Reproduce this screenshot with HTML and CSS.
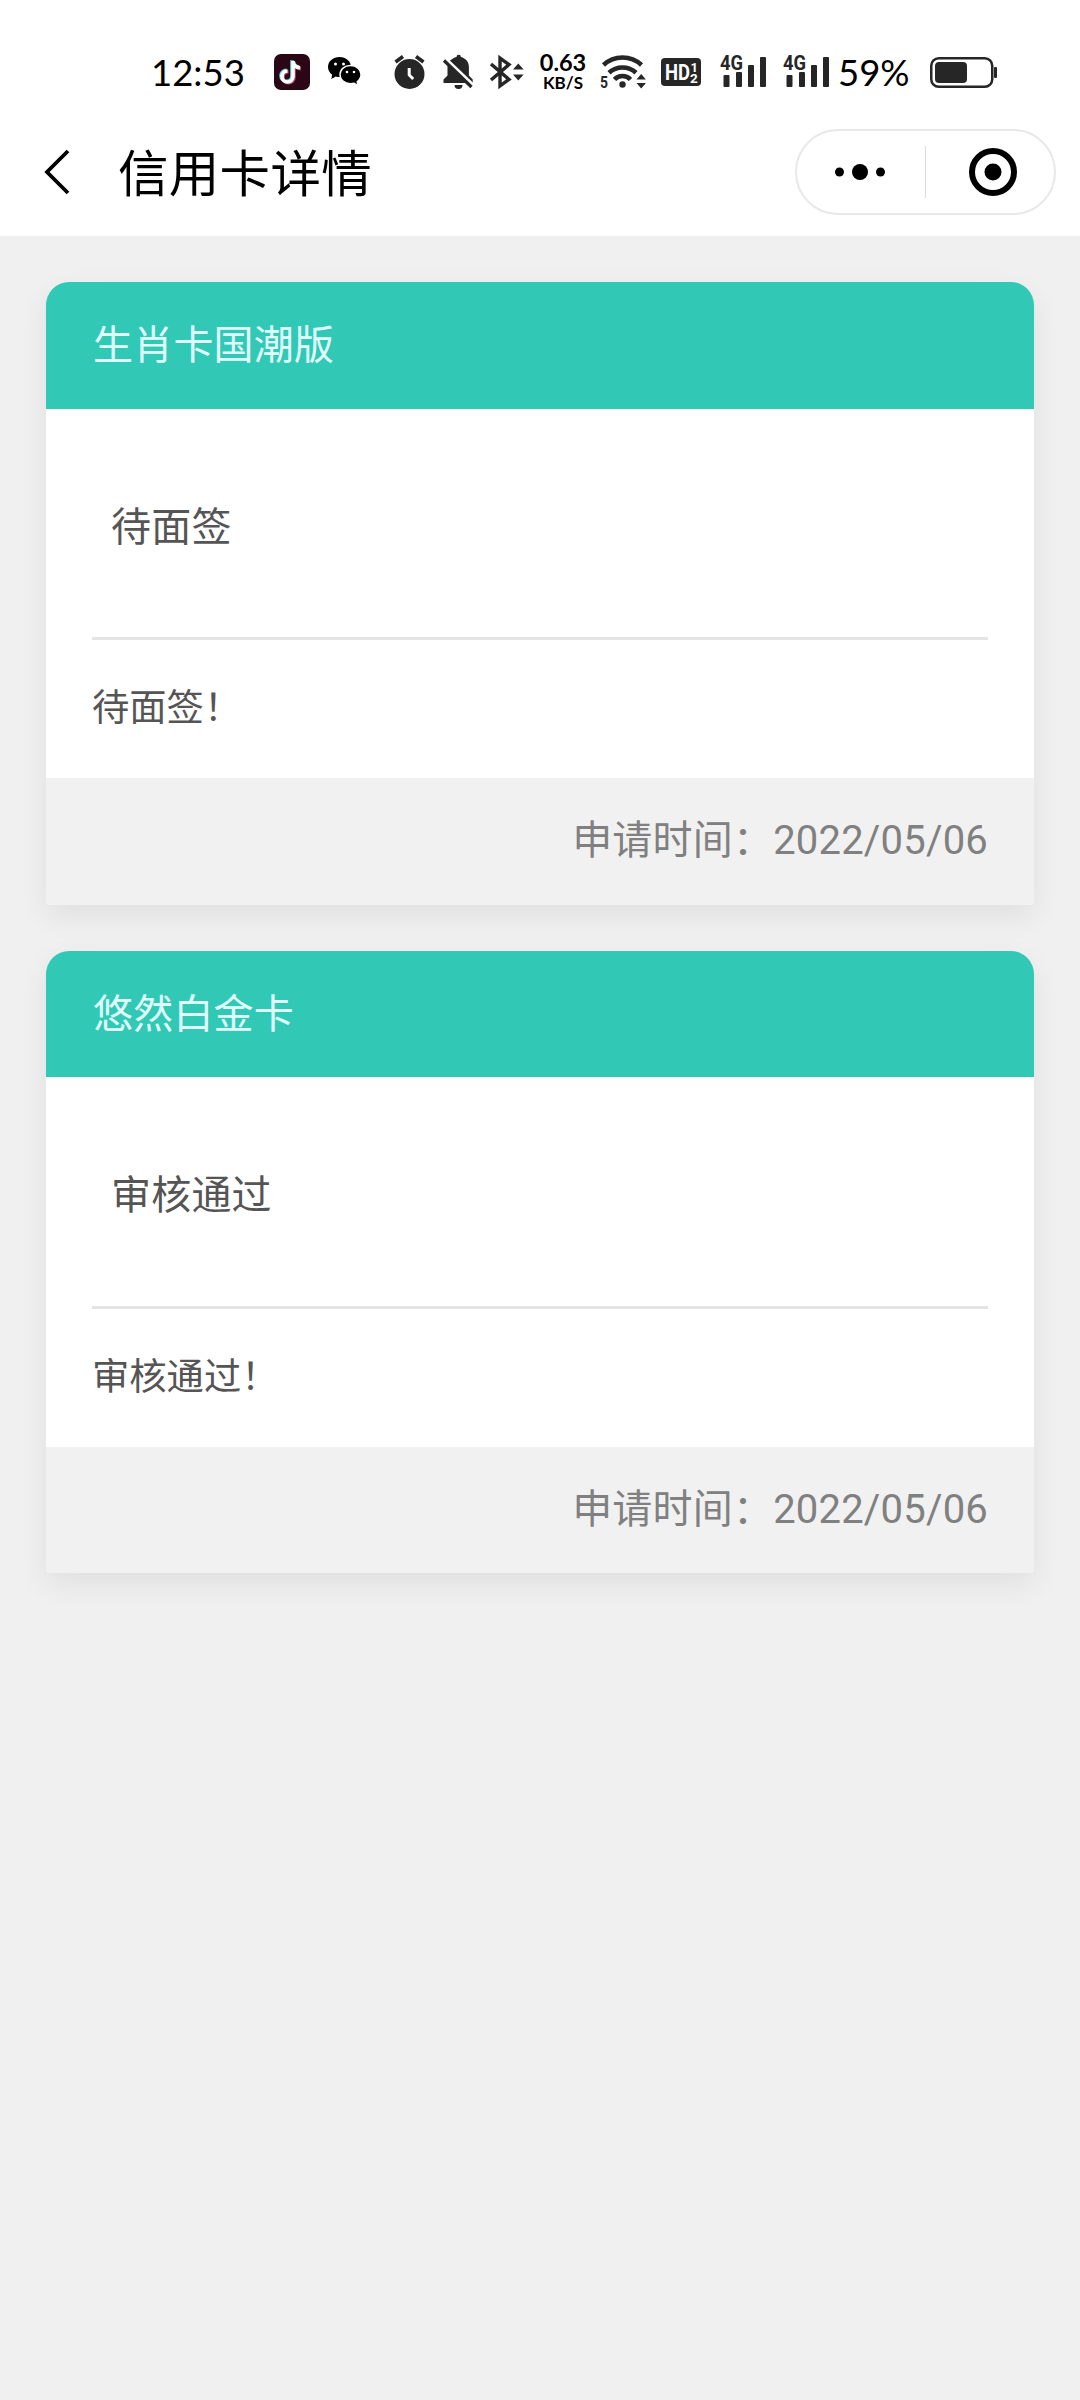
FILE: index.html
```html
<!DOCTYPE html>
<html lang="zh-CN">
<head>
<meta charset="utf-8">
<title>信用卡详情</title>
<link rel="stylesheet" href="styles.css">
</head>
<body>
<header class="top">
  <div class="statusbar">
    <span class="clock">12:53</span>
    <svg class="icon tiktok" width="36" height="36" viewBox="0 0 36 36">
      <rect width="36" height="36" rx="7" fill="#2b0716"/>
      <g fill="none" stroke-width="3.600">
        <path d="M19 7v15.500a5.500 5.500 0 1 1-5.500-5.500M19 7.500c.5 4 3.200 6 7 6.300" stroke="#62d5db" transform="translate(-1 -.800)"/>
        <path d="M19 7v15.500a5.500 5.500 0 1 1-5.500-5.500M19 7.500c.5 4 3.200 6 7 6.300" stroke="#b84666" transform="translate(1 .800)"/>
        <path d="M19 7v15.500a5.500 5.500 0 1 1-5.500-5.500M19 7.500c.5 4 3.200 6 7 6.300" stroke="#fff"/>
      </g>
    </svg>
    <svg class="icon wechat" width="34" height="30" viewBox="0 0 34 30">
      <path d="M11.500 0C5 0 0 4.400 0 10c0 3.200 1.600 5.900 4.200 7.700L3.300 22l4.500-2.500c1.300.4 2.500.6 3.700.6 6.500 0 11.500-4.500 11.500-10.100S18 0 11.500 0z"/>
      <path d="M22.500 8.500C16.500 8.500 12 12.500 12 17.600s4.500 9.100 10.500 9.100c1.300 0 2.500-.2 3.600-.5l4 2.300-.9-3.800c2.300-1.700 3.800-4.200 3.800-7.100 0-5.100-4.500-9.100-10.500-9.100z" stroke="#fff" stroke-width="1.400"/>
      <g fill="#fff"><circle cx="7.500" cy="7" r="1.500"/><circle cx="15.500" cy="7" r="1.500"/><circle cx="19" cy="15" r="1.300"/><circle cx="26" cy="15" r="1.300"/></g>
    </svg>
    <svg class="icon alarm" width="31" height="34" viewBox="0 0 31 34">
      <circle cx="15.500" cy="19" r="15"/>
      <path d="M1.500 7L9 1.500M29.500 7L22 1.500" stroke="#262626" stroke-width="3.600"/>
      <path d="M15.200 13v7l4 4" fill="none" stroke="#fff" stroke-width="3"/>
    </svg>
    <svg class="icon bell" width="31" height="34" viewBox="0 0 31 34">
      <path d="M13.500 2a2.200 2.200 0 0 1 4.400 0c5 1.300 8 5 8 10v8.500l3.800 4V28H.500v-3.500l4-4V12c0-5 4-8.700 9-10zM11.500 30h8a4 4 0 0 1-8 0z"/>
      <path d="M3.200 4.200L31 30.500" stroke="#fff" stroke-width="3"/>
      <path d="M1 5.500L28.500 32" stroke="#262626" stroke-width="3.200"/>
    </svg>
    <svg class="icon bluetooth" width="34" height="34" viewBox="0 0 34 34">
      <path d="M1 9l18 15.500L10 31V3l9 6.500L1 25" fill="none" stroke="#262626" stroke-width="3.400"/>
      <path d="M23 14.500l5.300-6 5.300 6zM23 19.500h10.600l-5.300 6z"/>
    </svg>
    <div class="speed"><span class="speed-value">0.63</span><span class="speed-unit">KB/S</span></div>
    <svg class="icon wifi" width="46" height="36" viewBox="0 0 46 36">
      <g fill="none" stroke="#262626" stroke-width="4.600">
        <path d="M3.500 11a28 28 0 0 1 38 0"/>
        <path d="M9 18.700a20 20 0 0 1 27 0"/>
        <path d="M14.500 25.500a11 11 0 0 1 16 0"/>
      </g>
      <circle cx="22.500" cy="30.500" r="3.200"/>
      <path d="M36.500 25.500l4.700-5.500 4.700 5.500zM36.500 29h9.400l-4.700 5.500z"/>
      <text class="glyph-text" x="0" y="34" font-size="17" textLength="8" lengthAdjust="spacingAndGlyphs">5</text>
    </svg>
    <svg class="icon hd" width="40" height="28" viewBox="0 0 40 28">
      <rect width="40" height="28" rx="4"/>
      <g fill="#fff" class="glyph-text">
        <text x="4" y="21.500" font-size="22" textLength="25" lengthAdjust="spacingAndGlyphs">HD</text>
        <text x="29.500" y="13.500" font-size="13">1</text>
        <text x="29" y="24.500" font-size="13.500">2</text>
      </g>
    </svg>
    <svg class="icon signal" width="47" height="34" viewBox="0 0 47 34">
      <text class="glyph-text" x="0" y="15" font-size="20" textLength="23" lengthAdjust="spacingAndGlyphs">4G</text>
      <rect x="3.500" y="20" width="6" height="12" rx="1"/><rect x="16" y="17" width="6" height="15" rx="1"/><rect x="28" y="10" width="6" height="22" rx="1"/><rect x="40" y="2" width="6" height="30" rx="1"/>
    </svg>
    <svg class="icon signal second" width="47" height="34" viewBox="0 0 47 34">
      <text class="glyph-text" x="0" y="15" font-size="20" textLength="23" lengthAdjust="spacingAndGlyphs">4G</text>
      <rect x="3.500" y="20" width="6" height="12" rx="1"/><rect x="16" y="17" width="6" height="15" rx="1"/><rect x="28" y="10" width="6" height="22" rx="1"/><rect x="40" y="2" width="6" height="30" rx="1"/>
    </svg>
    <span class="percent">59%</span>
    <svg class="icon battery" width="67" height="31" viewBox="0 0 67 31">
      <rect x="1.250" y="1.250" width="61" height="28.500" rx="7.500" fill="none" stroke="#262626" stroke-width="2.500"/>
      <rect x="5" y="5" width="32" height="21" rx="4"/>
      <rect x="64" y="10" width="3" height="11" rx="1"/>
    </svg>
  </div>
  <nav class="navbar">
    <svg class="back" width="26" height="48" viewBox="0 0 26 48"><path d="M24 3L3 24 24 45" fill="none" stroke="#000" stroke-width="3.800"/></svg>
    <h1 class="title">信用卡详情</h1>
    <div class="capsule">
      <svg class="more" width="52" height="18" viewBox="0 0 52 18"><circle cx="5.500" cy="9" r="4.500"/><circle cx="26" cy="9" r="8"/><circle cx="46.500" cy="9" r="4.500"/></svg>
      <span class="separator"></span>
      <svg class="close" width="48" height="48" viewBox="0 0 48 48"><circle cx="24" cy="24" r="21" fill="none" stroke="#000" stroke-width="6"/><circle cx="24" cy="24" r="8.500"/></svg>
    </div>
  </nav>
</header>
<main class="list">
  <section class="card">
    <h2 class="card-title">生肖卡国潮版</h2>
    <div class="card-body">
      <p class="status">待面签</p>
      <p class="note">待面签！</p>
    </div>
    <footer class="card-foot">申请时间：2022/05/06</footer>
  </section>
  <section class="card">
    <h2 class="card-title">悠然白金卡</h2>
    <div class="card-body">
      <p class="status">审核通过</p>
      <p class="note">审核通过！</p>
    </div>
    <footer class="card-foot">申请时间：2022/05/06</footer>
  </section>
</main>
</body>
</html>
```
FILE: styles.css
```css
* { box-sizing: border-box; margin: 0; padding: 0; }
body {
  min-height: 2400px;
  background: #f0f0f0;
  font-family: Roboto, "Noto Sans CJK SC", sans-serif;
}
svg { display: block; flex: none; overflow: visible; }

.top { height: 236px; background: #fff; }
.statusbar {
  display: flex;
  align-items: center;
  height: 108px;
  padding: 36px 0 0 151px;
}
.icon { fill: #262626; }
.clock, .percent {
  flex: none;
  font: 36.5px/44px Lato, sans-serif;
  color: #000;
  white-space: nowrap;
}
.clock { width: 123px; }
.percent { width: 92px; margin-left: 8px; }
.wechat { margin-left: 18px; fill: #000; }
.alarm { margin-left: 32px; }
.bell { margin-left: 18px; }
.bluetooth { margin-left: 16px; }
.speed {
  display: flex;
  flex-direction: column;
  align-items: center;
  width: 50px;
  margin-left: 14px;
  font-family: Lato, sans-serif;
  font-weight: 700;
  color: #000;
}
.speed-value { font-size: 23.5px; line-height: 21px; }
.speed-unit { font-size: 17px; line-height: 19px; }
.wifi { margin-left: 12px; }
.hd { margin-left: 15px; }
.signal { margin-left: 19px; }
.second { margin-left: 16px; }
.glyph-text { font-family: Roboto, sans-serif; font-weight: 700; }

.navbar {
  display: flex;
  align-items: center;
  height: 128px;
  padding: 0 24px 0 44px;
}
.title {
  margin-left: 48px;
  padding-top: 5px;
  font-size: 50.5px;
  line-height: 64px;
  letter-spacing: 0.3px;
  font-weight: 400;
  color: #000;
}
.capsule {
  display: flex;
  align-items: center;
  width: 261px;
  height: 86px;
  margin-left: auto;
  padding-left: 37px;
  border: 2px solid #e8e8e8;
  border-radius: 43px;
}
.separator { width: 1px; height: 52px; margin: 0 43px 0 39px; background: #dcdcdc; }

.list {
  display: flex;
  flex-direction: column;
  gap: 46px;
  padding: 46px;
}
.card {
  border-radius: 23px 23px 4px 4px;
  background: #fff;
  box-shadow: 0 11px 30px rgba(0, 0, 0, 0.07);
  overflow: hidden;
}
.card-title {
  height: 126.5px;
  padding: 0 47px;
  background: #31c8b6;
  font-size: 40px;
  line-height: 127px;
  letter-spacing: 0.2px;
  font-weight: 400;
  color: #e0fffb;
}
.card-body { padding: 0 46px; color: #555; }
.status {
  height: 231.5px;
  padding: 4px 19px 0;
  border-bottom: 3px solid #e4e4e4;
  font-size: 40px;
  line-height: 230px;
  letter-spacing: 0.2px;
}
.note { height: 138px; font-size: 37.3px; line-height: 137px; }
.card-foot {
  height: 126.5px;
  padding-right: 46px;
  background: #f1f1f1;
  font-size: 40px;
  line-height: 126px;
  letter-spacing: 0.2px;
  text-align: right;
  color: #808080;
}
```
